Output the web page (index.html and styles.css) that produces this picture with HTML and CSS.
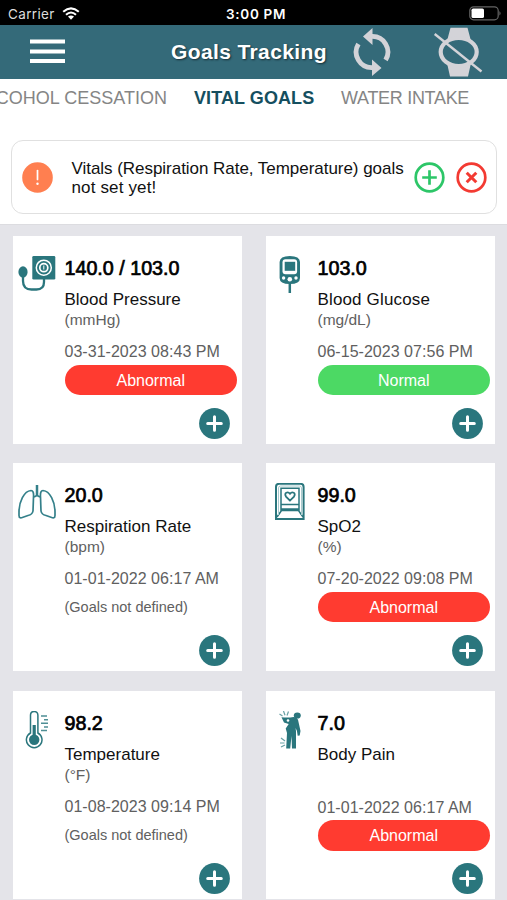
FILE: index.html
```html
<!DOCTYPE html>
<html lang="en">
<head>
<meta charset="utf-8">
<title>Goals Tracking</title>
<link rel="stylesheet" href="styles.css">
</head>
<body>
<svg class="defs" width="0" height="0">
  <symbol id="plus" viewBox="0 0 31 31"><circle cx="15.500" cy="15.500" r="15.400" fill="#2a767d"/><path d="M15.500 8.700v13.600M8.700 15.500h13.600" stroke="#fff" stroke-width="3" stroke-linecap="round"/></symbol>
</svg>
<div class="status">
  <span class="carrier">Carrier</span>
  <svg class="wifi" width="18" height="13" viewBox="0 0 18 13" fill="none" stroke="#fff" stroke-width="2.100"><path d="M1.200 4.800Q9-2 16.800 4.800M4 7.700Q9 3.300 14 7.700"/><path d="M6 9.600Q9 7.300 12 9.600L9 12.700Z" fill="#fff" stroke="none"/></svg>
  <span class="time">3:00 PM</span>
  <svg class="battery" width="33" height="15" viewBox="0 0 33 15"><rect x=".8" y=".8" width="28.400" height="13" rx="3.800" fill="none" stroke="#656565" stroke-width="1.200"/><rect x="2.500" y="2.600" width="12.500" height="9.400" rx="1.600" fill="#fff"/><path d="M30.400 5q2.400 2.300 0 4.600z" fill="#656565"/></svg>
</div>
<header class="bar">
  <svg class="menu" width="35" height="25" viewBox="0 0 35 25"><path d="M0 2.500h35M0 12.500h35M0 22h35" stroke="#fff" stroke-width="4"/></svg>
  <h1>Goals Tracking</h1>
  <svg class="sync" width="38" height="50" viewBox="0 0 38 50"><path d="M18.500 9.500A15.500 15.500 0 0 1 32.600 33M19.500 40.500A15.500 15.500 0 0 1 5.400 17" fill="none" stroke="#d3d3d8" stroke-width="4.800"/><path d="M10 9.500L19.500 1v17zM28.500 41L19 32.500V49z" fill="#d3d3d8"/></svg>
  <svg class="watch" width="50" height="50" viewBox="0 0 50 50"><path d="M17.500.8h17L38 14H14zM14 36h24l-3 13.500H17z" fill="#d3d3d8"/><ellipse cx="25.700" cy="25" rx="18" ry="14" fill="#346a79" stroke="#d3d3d8" stroke-width="4.200"/><path d="M1.700 7L48.500 44.500" stroke="#d3d3d8" stroke-width="2.400"/></svg>
</header>
<nav class="tabs">
  <span class="tab first">COHOL CESSATION</span>
  <span class="tab active">VITAL GOALS</span>
  <span class="tab last">WATER INTAKE</span>
</nav>
<section class="alert">
  <svg width="31" height="31" viewBox="0 0 31 31"><circle cx="15.500" cy="15.500" r="15.300" fill="#ff7f50"/><path d="M15.500 8.500v9" stroke="#fff" stroke-width="1.700" stroke-linecap="round"/><circle cx="15.500" cy="21.800" r="1.200" fill="#fff"/></svg>
  <p>Vitals (Respiration Rate, Temperature) goals<br><span>not set yet!</span></p>
  <svg width="31" height="31" viewBox="0 0 31 31" fill="none" stroke="#2dc668" stroke-width="2.700"><circle cx="15.500" cy="15.500" r="13.800"/><path d="M15.500 8.200v14.600M8.200 15.500h14.600"/></svg>
  <svg class="close" width="31" height="31" viewBox="0 0 31 31" fill="none" stroke="#f33a32" stroke-width="2.700"><circle cx="15.500" cy="15.500" r="13.800"/><path d="M10.700 10.700l9.600 9.600M20.300 10.700l-9.600 9.600" stroke-width="3"/></svg>
</section>
<main class="grid">
  <article class="card">
    <svg class="icon" viewBox="0 0 38 38"><path d="M5 17v8q0 8.500 8.500 8.500h5q7.500 0 7.500-7.500v-3" fill="none" stroke="#2a767d" stroke-width="2.300"/><ellipse cx="5" cy="16" rx="4.600" ry="5.700" fill="#2a767d"/><rect x="14.300" y="0" width="23" height="23.500" rx="1.300" fill="#2a767d"/><circle cx="25.800" cy="11.700" r="7.500" fill="none" stroke="#fff" stroke-width="1.500"/><circle cx="25.800" cy="11.700" r="4" fill="none" stroke="#fff" stroke-width="1.700"/><path d="M25.800 9.500v4" stroke="#fff"/></svg>
    <div class="info"><h2>140.0 / 103.0</h2><h3>Blood Pressure</h3><p class="unit">(mmHg)</p><p class="date">03-31-2023 08:43 PM</p><div class="pill bad">Abnormal</div></div>
    <svg class="add"><use href="#plus"/></svg>
  </article>
  <article class="card">
    <svg class="icon" viewBox="0 0 38 38"><path d="M18.800 25v12" stroke="#2a767d" stroke-width="2.500"/><path d="M8.600 6Q8.800 0 18.800 0T29 6v16q0 6-10.200 6T8.600 22z" fill="#2a767d"/><rect x="11.500" y="3.300" width="14.600" height="15" rx="3" fill="#fff"/><rect x="13.700" y="5.800" width="10.500" height="9" fill="#2a767d"/><g fill="#fff"><circle cx="12.600" cy="22" r="1.700"/><circle cx="18.800" cy="23.300" r="2.300"/><circle cx="25" cy="22" r="1.700"/></g></svg>
    <div class="info"><h2>103.0</h2><h3 class="wide">Blood Glucose</h3><p class="unit">(mg/dL)</p><p class="date">06-15-2023 07:56 PM</p><div class="pill good">Normal</div></div>
    <svg class="add"><use href="#plus"/></svg>
  </article>
  <article class="card">
    <svg class="icon low" viewBox="0 0 38 38" fill="none" stroke="#34808a" stroke-width="1.700" stroke-linejoin="round"><path d="M15.500 12Q16 5.500 13 5.500C6 6 1 17 1 27v3.500c0 3 2 2.500 4 1.700l5-1.700q4.500-1 5-4.500zM22.500 12Q22 5.500 25 5.500C32 6 37 17 37 27v3.500c0 3-2 2.500-4 1.700l-5-1.700q-4.500-1-5-4.500zM15 12.500l4-2 4 2"/><path d="M19 0v11" stroke-width="2.500"/></svg>
    <div class="info"><h2>20.0</h2><h3>Respiration Rate</h3><p class="unit">(bpm)</p><p class="date">01-01-2022 06:17 AM</p><p class="none">(Goals not defined)</p></div>
    <svg class="add"><use href="#plus"/></svg>
  </article>
  <article class="card">
    <svg class="icon" viewBox="0 0 38 38" fill="none" stroke="#2a767d" stroke-width="1.500"><path d="M5 36V4q0-3.200 3.200-3.200h21.200q3.200 0 3.200 3.200v32z" stroke-width="2"/><path d="M10 28V5.200h18V28M10 21.500h18M10 26h18M6 34l4.500-6.500h17L32 34"/><path d="M7.500 32V5q0-2 2-2h19q2 0 2 2v27" stroke="#a9cbce" stroke-width="1"/><path d="M19 17.600l-4-4c-2.500-4 2-5.500 4-2.800 2-2.700 6.500-1.200 4 2.800z" stroke-width="1.800"/></svg>
    <div class="info"><h2>99.0</h2><h3>SpO2</h3><p class="unit">(%)</p><p class="date">07-20-2022 09:08 PM</p><div class="pill bad">Abnormal</div></div>
    <svg class="add"><use href="#plus"/></svg>
  </article>
  <article class="card">
    <svg class="icon" viewBox="0 0 38 38" fill="none" stroke="#2a767d" stroke-width="1.500"><path d="M12.500 22V4.300Q12.500.5 16.200.5T19.900 4.300V22a7.800 7.800 0 1 1-7.400 0z"/><path d="M16.200 14v12" stroke-width="3.200"/><circle cx="16.200" cy="28.800" r="5.200" fill="#2a767d" stroke="none"/><path d="M23 5h6M26 8.700h4M23 12.300h7M26 16h4M23 19.600h6" stroke="#4f8f95"/></svg>
    <div class="info"><h2>98.2</h2><h3>Temperature</h3><p class="unit">(°F)</p><p class="date">01-08-2023 09:14 PM</p><p class="none">(Goals not defined)</p></div>
    <svg class="add"><use href="#plus"/></svg>
  </article>
  <article class="card pain">
    <svg class="icon" viewBox="0 0 38 38"><g fill="#2a767d"><ellipse cx="26.300" cy="4.500" rx="3.500" ry="3.100"/><path d="M10.500 6.300q7 .7 12-.3 4.500 0 5 5l2 9-.8 4.500-2 .3-.8-5-1.400-2.800.5 3V37.500h-4L20.500 25l-1.300 12.500h-4L16 22l-1.300-4.500 3-4.500-4.700-1.500z"/></g><circle cx="17" cy="9.500" r="1.300" fill="#fff"/><path d="M8.500 3L11.500 5M12.500 0l1.500 4.200M17.500.5L16 4.500M10 27l4 3M9 32h4.500M10 36l4-2" fill="none" stroke="#69a1a5" stroke-width="1.200"/></svg>
    <div class="info"><h2>7.0</h2><h3>Body Pain</h3><p class="unit"></p><p class="date">01-01-2022 06:17 AM</p><div class="pill bad">Abnormal</div></div>
    <svg class="add"><use href="#plus"/></svg>
  </article>
</main>
</body>
</html>
```

FILE: styles.css
```css
* { box-sizing: border-box; margin: 0; padding: 0; }
body { width: 507px; height: 900px; overflow: hidden; background: #fff; color: #111; font-family: "Liberation Sans", Arial, sans-serif; }
svg { display: block; flex: none; }
.defs { position: absolute; }
.status { height: 25px; background: #000; color: #fff; display: flex; align-items: center; padding: 2px 4px 0 8px; font: 13.500px/20px Inter, sans-serif; letter-spacing: .35px; }
.carrier { width: 54px; color: #ddd; }
.time { margin-left: 146px; font-weight: 600; letter-spacing: .7px; }
.battery { margin-left: auto; margin-right: 1px; }
.bar { height: 54px; background: #346a79; display: flex; align-items: center; padding-left: 30px; }
.menu { margin-top: -1px; }
h1 { width: 157px; margin-left: 106px; color: #fff; font-size: 21px; line-height: 28px; letter-spacing: .38px; white-space: nowrap; text-shadow: 1px 1px 2px #152d35; }
.sync { margin-left: 25px; }
.watch { margin-left: 42px; }
.tabs { height: 61px; display: flex; gap: 27px; font-size: 18px; line-height: 38px; color: #858585; white-space: nowrap; }
.first { width: 167px; display: flex; justify-content: flex-end; letter-spacing: .02px; }
.active { color: #154f5f; font-weight: bold; width: 120px; letter-spacing: .08px; }
.last { letter-spacing: -.3px; }
.alert { height: 74px; margin: 0 10px 10px 11px; border: 1px solid #e0e0e0; border-radius: 12px; display: flex; align-items: center; padding-left: 10px; }
.alert p { width: 342px; margin-left: 18.500px; font-size: 17px; line-height: 19.500px; letter-spacing: -.04px; white-space: nowrap; margin-top: 2px; }
.alert p span { letter-spacing: .15px; }
.close { margin-left: 11px; }
.grid { height: 676px; background: #e4e4e9; border-top: 1px solid #dcdce0; padding: 11px 12px 0 13px; display: grid; grid-template-columns: 229px 229px; grid-auto-rows: 208px; gap: 19.300px 24px; align-content: start; }
.card { background: #fff; display: grid; grid-template-columns: 51.500px 172.500px; grid-template-rows: 159px 31px; row-gap: 13px; }
.icon { width: 38px; height: 38px; margin: 20px 0 0 5px; }
.low { margin-top: 22px; }
.info { padding-top: 20px; white-space: nowrap; }
h2 { font-size: 19.700px; line-height: 25px; font-weight: 400; -webkit-text-stroke: .7px #000; color: #000; }
h3 { margin-top: 8px; font-size: 17px; line-height: 22px; font-weight: 400; }
.wide { letter-spacing: .15px; }
.unit { height: 18px; font-size: 15.500px; line-height: 17px; color: #606060; }
.date { margin-top: 13px; font-size: 16px; line-height: 20px; letter-spacing: .03px; color: #606060; }
.pain .date { margin-top: 14px; }
.pill { margin-top: 2.500px; height: 30.500px; border-radius: 16px; color: #fff; text-align: center; font-size: 16px; line-height: 31px; }
.bad { background: #ff3b30; }
.good { background: #4cd964; }
.none { margin-top: 3px; font-size: 14.500px; line-height: 31px; color: #606060; }
.add { grid-column: 2; width: 31px; height: 31px; margin-left: 134px; }
```
